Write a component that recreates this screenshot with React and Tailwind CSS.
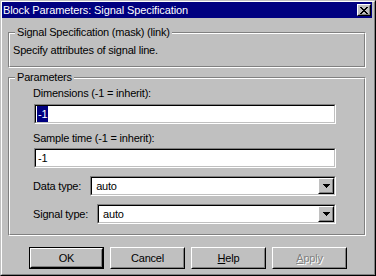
const FACE = "bg-[#c0c0c0]";

function Group({ label, className, bodyClass, children }) {
  return (
    <div className={`relative border border-t-[#808080] border-l-[#808080] border-r-white border-b-white ${className}`}>
      <div className={`h-full border border-t-white border-l-white border-r-[#808080] border-b-[#808080] ${bodyClass}`}>
        {children}
      </div>
      <span className={`absolute left-[6px] -top-[7px] px-[2px] ${FACE}`}>{label}</span>
    </div>
  );
}

function Field({ className, children }) {
  return (
    <div className={`border border-t-[#808080] border-l-[#808080] border-r-white border-b-white ${className}`}>
      <div className="h-full border border-t-black border-l-black border-r-[#c0c0c0] border-b-[#c0c0c0] bg-white flex items-center">
        {children}
      </div>
    </div>
  );
}

function Raised({ className, children }) {
  return (
    <div className={`border border-t-white border-l-white border-r-black border-b-black ${className}`}>
      <div className={`h-full border border-t-[#c0c0c0] border-l-[#c0c0c0] border-r-[#808080] border-b-[#808080] flex items-center justify-center ${FACE}`}>
        {children}
      </div>
    </div>
  );
}

function Select({ label, value }) {
  return (
    <div className="mt-[8px] h-[20px] w-[302px] flex items-center gap-[9px]">
      <span className="-ml-px">{label}</span>
      <Field className="flex-1 h-full">
        <span className="flex-1 pl-[4px]">{value}</span>
        <Raised className="w-[16px] h-full">
          <svg width="7" height="4" viewBox="0 0 7 4" shapeRendering="crispEdges">
            <polygon points="0,0 7,0 3.5,4" fill="#000" />
          </svg>
        </Raised>
      </Field>
    </div>
  );
}

function Button({ children, def, disabled }) {
  const btn = (
    <Raised className={def ? "h-full" : "w-[75px] h-[22px]"}>
      <span className={disabled ? "text-[#808080] [text-shadow:1px_1px_0_#fff]" : ""}>{children}</span>
    </Raised>
  );
  if (def) return <div className="w-[75px] h-[22px] border border-black">{btn}</div>;
  return btn;
}

function CloseGlyph() {
  const px = [
    [0, 0], [1, 0], [6, 0], [7, 0],
    [1, 1], [2, 1], [5, 1], [6, 1],
    [2, 2], [3, 2], [4, 2], [5, 2],
    [3, 3], [4, 3],
    [2, 4], [3, 4], [4, 4], [5, 4],
    [1, 5], [2, 5], [5, 5], [6, 5],
    [0, 6], [1, 6], [6, 6], [7, 6],
  ];
  return (
    <svg width="8" height="7" viewBox="0 0 8 7" shapeRendering="crispEdges">
      {px.map(([x, y]) => <rect key={`${x}-${y}`} x={x} y={y} width="1" height="1" fill="#000" />)}
    </svg>
  );
}

export default function App() {
  return (
    <div className={`w-[376px] h-[276px] ${FACE} text-black text-[11px] leading-[13px] tracking-[-0.2px] font-['Liberation_Sans',Arial,sans-serif]`}>
      <div className="h-full border border-t-[#c0c0c0] border-l-[#c0c0c0] border-r-black border-b-black">
        <div className="h-full border border-t-white border-l-white border-r-[#808080] border-b-[#808080] flex flex-col">
          {/* title bar */}
          <div className="h-[16px] mr-[2px] bg-[#000080] flex items-center justify-between pl-[1px] pr-px">
            <span className="text-white tracking-[-0.1px]">Block Parameters: Signal Specification</span>
            <Raised className="w-[14px] h-[12px]">
              <CloseGlyph />
            </Raised>
          </div>

          <Group
            label="Signal Specification (mask) (link)"
            className="mt-[14px] ml-[6px] mr-[8px] h-[36px]"
            bodyClass="pt-[10px] pl-[3px]"
          >
            <div>Specify attributes of signal line.</div>
          </Group>

          <Group label="Parameters" className="mt-[9px] ml-[6px] mr-[8px] h-[159px]" bodyClass="pl-[24px]">
            <div className="mt-[8px] -ml-px">Dimensions (-1 = inherit):</div>
            <Field className="mt-[4px] w-[302px] h-[20px]">
              <span className="ml-px px-px h-[16px] leading-[16px] bg-[#000080] text-white">-1</span>
            </Field>
            <div className="mt-[8px] -ml-px">Sample time (-1 = inherit):</div>
            <Field className="mt-[3px] w-[302px] h-[20px]">
              <span className="ml-[2px]">-1</span>
            </Field>
            <Select label="Data type:" value="auto" />
            <Select label="Signal type:" value="auto" />
          </Group>

          <div className="mt-[11px] pl-[27px] flex gap-[6px]">
            <Button def>OK</Button>
            <Button>Cancel</Button>
            <Button><u>H</u>elp</Button>
            <Button disabled><u>A</u>pply</Button>
          </div>
        </div>
      </div>
    </div>
  );
}
